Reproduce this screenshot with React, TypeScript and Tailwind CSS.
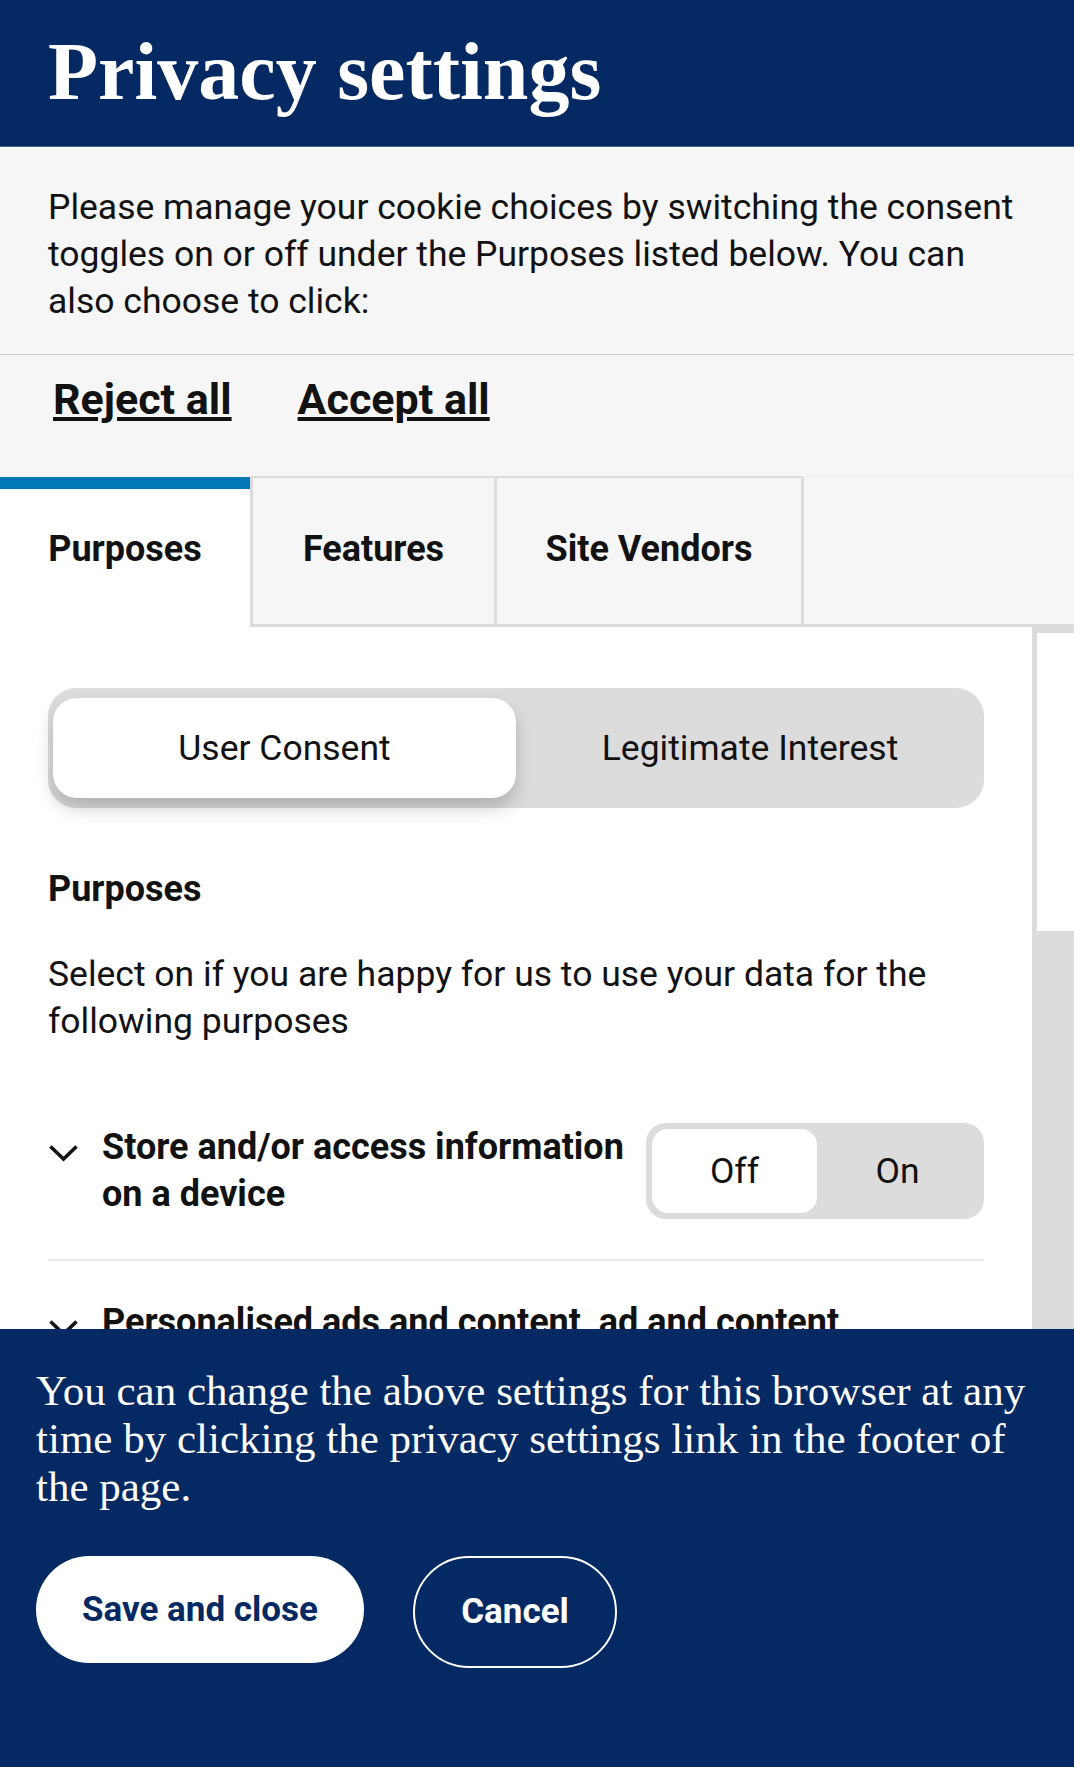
import React from "react";

function Chevron() {
  return (
    <svg width="31" height="18" viewBox="0 0 31 18" className="shrink-0 mt-[20px]">
      <polyline points="2.5,2.5 15.5,15 28.5,2.5" fill="none" stroke="#121212" strokeWidth="3.6" />
    </svg>
  );
}

function Toggle() {
  return (
    <div className="shrink-0 w-[338px] h-[96px] rounded-[20px] bg-[#dcdcdc] p-[6px] flex">
      <div className="w-[165px] rounded-[16px] bg-white flex items-center justify-center text-[35.5px] leading-[42px]">
        Off
      </div>
      <div className="flex-1 flex items-center justify-center text-[35.5px] leading-[42px]">On</div>
    </div>
  );
}

export default function App() {
  return (
    <div className="h-[1767px] w-[1074px] overflow-hidden flex flex-col bg-white font-['Roboto',sans-serif] text-[#121212]">
      <header className="shrink-0 bg-[#052962] border-b border-[#415f8f] px-[48px] pt-[32px] pb-[34px]">
        <h1 className="font-['Liberation_Serif',serif] font-bold text-[82px] leading-[80px] text-white">
          Privacy settings
        </h1>
      </header>

      <section className="shrink-0 bg-[#f6f6f6] px-[48px] pt-[37px] pb-[29px] border-b border-[#cfcfcf]">
        <p className="text-[35.5px] leading-[47px] w-[970px]">
          Please manage your cookie choices by switching the consent toggles on or off under the Purposes listed below. You
          can also choose to click:
        </p>
      </section>

      <div className="shrink-0 bg-[#f6f6f6] h-[121px] pl-[53px] pt-[19px] flex gap-[66px]">
        <a className="font-bold text-[43px] leading-[50px] underline decoration-[4px] underline-offset-[3px]">Reject all</a>
        <a className="font-bold text-[43px] leading-[50px] underline decoration-[4px] underline-offset-[3px]">Accept all</a>
      </div>

      <div className="shrink-0 h-[151px] flex bg-[#f6f6f6]">
        <div className="w-[250px] mt-[1px] bg-white border-t-[12px] border-[#0077b6] pt-[39px] text-center font-bold text-[36px] leading-[42px]">
          Purposes
        </div>
        <div className="w-[244px] border-l-[3px] border-t-2 border-b-[3px] border-[#dcdcdc] pt-[50px] text-center font-bold text-[36px] leading-[42px]">
          Features
        </div>
        <div className="w-[307px] border-l-[3px] border-t-2 border-b-[3px] border-[#dcdcdc] pt-[50px] text-center font-bold text-[36px] leading-[42px]">
          Site Vendors
        </div>
        <div className="flex-1 border-l-[3px] border-l-[#dcdcdc] border-t border-t-[#ececec] border-b-[3px] border-b-[#dcdcdc]" />
      </div>

      <div className="flex-1 min-h-0 flex overflow-hidden">
        <main className="flex-1 px-[48px] overflow-hidden">
          <div className="mt-[61px] h-[120px] rounded-[28px] bg-[#dcdcdc] flex pl-[5px] py-[10px]">
            <div className="w-[463px] rounded-[24px] bg-white shadow-[0_10px_18px_rgba(0,0,0,0.2)] flex items-center justify-center text-[35.5px] leading-[42px]">
              User Consent
            </div>
            <div className="flex-1 flex items-center justify-center text-[35.5px] leading-[42px]">Legitimate Interest</div>
          </div>

          <h2 className="mt-[60px] font-bold text-[36px] leading-[42px]">Purposes</h2>
          <p className="mt-[41px] text-[35.5px] leading-[47px]">
            Select on if you are happy for us to use your data for the following purposes
          </p>

          <div className="mt-[78px] pb-[40px] border-b-2 border-[#e5e7eb] flex items-center">
            <div className="w-[598px] flex items-start">
              <Chevron />
              <div className="ml-[23px] flex-1 font-bold text-[36px] leading-[47px]">Store and/or access information on a device</div>
            </div>
            <Toggle />
          </div>

          <div className="pt-[38px]">
            <div className="flex items-start">
              <Chevron />
              <div className="ml-[23px] w-[800px] font-bold text-[36px] leading-[47px]">
                Personalised ads and content, ad and content measurement, audience insights and product development
              </div>
            </div>
          </div>
        </main>
        <div className="w-[42px] shrink-0 bg-[#dcdcdc] pl-[5px] pt-[6px]">
          <div className="h-[298px] bg-white" />
        </div>
      </div>

      <footer className="shrink-0 h-[438px] bg-[#052962] px-[36px] pt-[38px]">
        <p className="w-[1010px] font-['Liberation_Serif',serif] text-[43px] leading-[48px] text-white">
          You can change the above settings for this browser at any time by clicking the privacy settings link in the footer of
          the page.
        </p>
        <div className="mt-[45px] flex items-start gap-[49px]">
          <button className="w-[328px] h-[107px] rounded-full bg-white text-[#052962] font-bold text-[35px] leading-[42px] flex items-center justify-center">
            Save and close
          </button>
          <button className="w-[204px] h-[112px] rounded-full border-2 border-white text-white font-bold text-[35px] leading-[42px] flex items-center justify-center">
            Cancel
          </button>
        </div>
      </footer>
    </div>
  );
}
